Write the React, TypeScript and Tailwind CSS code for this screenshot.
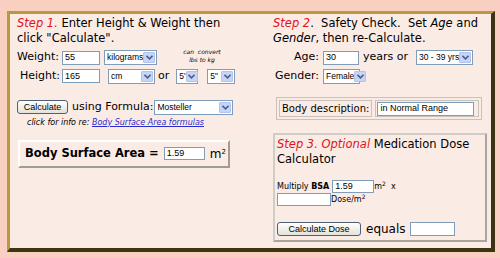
import React from 'react'

const font = { fontFamily: '"DejaVu Sans", Verdana, sans-serif' }
const small = { fontFamily: '"Liberation Sans", Arial, sans-serif' }

function Box({ value, w, h = 14 }: { value?: string; w: number; h?: number }) {
  return (
    <div
      className="bg-white border border-[#7f9db9] text-[9px] leading-none pl-[2px] flex items-center text-black shrink-0 whitespace-nowrap overflow-hidden"
      style={{ width: w, height: h, ...small }}
    >
      {value}
    </div>
  )
}

function Sel({ value, w, h = 15 }: { value: string; w: number; h?: number }) {
  return (
    <div
      className="bg-white border border-[#7f9db9] text-[8.5px] leading-none pl-[2px] flex items-center justify-between text-black shrink-0 whitespace-nowrap"
      style={{ width: w, height: h, ...small }}
    >
      <span>{value}</span>
      <span className="w-[12px] h-[11px] mr-[1px] shrink-0 bg-[#c6d4f7] border border-[#b2c4ee] rounded-[1px] flex items-center justify-center">
        <svg width="7" height="5" viewBox="0 0 7 5">
          <path d="M0.5 0.8 L3.5 3.8 L6.5 0.8" stroke="#4d6185" strokeWidth="1.6" fill="none" />
        </svg>
      </span>
    </div>
  )
}

function Btn({ label, w }: { label: string; w: number }) {
  return (
    <div
      className="h-[14px] border border-[#4f5f74] rounded-[3px] bg-gradient-to-b from-white to-[#e4e2d8] text-[9px] leading-none flex items-center justify-center text-black shrink-0 whitespace-nowrap"
      style={{ width: w, ...small }}
    >
      {label}
    </div>
  )
}

export default function App() {
  return (
    <div className="w-[500px] h-[258px] bg-[#f8cfc1] pt-[11px] pl-[7px] overflow-hidden" style={font}>
      <div className="w-[488px] h-[241px] bg-[#fbebe5] border-t-[3px] border-l-[3px] border-[#b8993f] border-r-[4px] border-r-[#3e3413] border-b-[4px] border-b-[#3e3413] flex text-black">
        {/* left column */}
        <div className="w-[263px] pl-[7px] pt-[2px]">
          <p className="text-[11.5px] leading-[15px] w-[230px]">
            <span className="text-[#e0141c] italic">Step 1.</span> Enter Height &amp; Weight then click "Calculate".
          </p>
          <div className="flex items-center mt-[4px] h-[15px] whitespace-nowrap">
            <span className="text-[11px] w-[45px]">Weight:</span>
            <Box value="55" w={38} />
            <div className="ml-[4px]"><Sel value="kilograms" w={53} /></div>
            <span className="ml-[22px] text-[6px] leading-[8px] italic -mt-[4px] w-[46px] text-center">can &nbsp;convert<br />lbs to kg</span>
          </div>
          <div className="flex items-center mt-[3px] h-[16px] whitespace-nowrap">
            <span className="text-[11px] w-[45px] pl-[3px]">Height:</span>
            <Box value="165" w={38} />
            <div className="ml-[8px]"><Sel value="cm" w={47} /></div>
            <span className="text-[11px] ml-[3px]">or</span>
            <div className="ml-[7px]"><Sel value="5'" w={22} /></div>
            <div className="ml-[9px]"><Sel value={'5"'} w={28} /></div>
          </div>
          <div className="flex items-center mt-[15px] whitespace-nowrap">
            <Btn label="Calculate" w={51} />
            <span className="text-[11px] ml-[4px]">using Formula:</span>
            <div className="ml-[1px]"><Sel value="Mosteller" w={79} /></div>
          </div>
          <p className="text-[8px] italic ml-[10px] mt-[2px] leading-[10px] whitespace-nowrap">
            click for info re: <span className="text-[#2b2bd0] underline">Body Surface Area formulas</span>
          </p>
          <div className="mt-[12px] ml-[1px] w-[212px] h-[28px] border-2 border-t-[#ffffff] border-l-[#ffffff] border-r-[#a09c98] border-b-[#a09c98] bg-[#fbebe5] flex items-center pl-[5px] whitespace-nowrap">
            <span className="text-[11.5px] font-bold">Body Surface Area =</span>
            <div className="ml-[5px]"><Box value="1.59" w={41} h={13} /></div>
            <span className="text-[12px] ml-[5px]">m<sup className="text-[7px]">2</sup></span>
          </div>
        </div>
        {/* right column */}
        <div className="flex-1 pt-[2px]">
          <p className="text-[11.5px] leading-[15px] w-[215px]">
            <span className="text-[#e0141c] italic">Step 2</span>. &nbsp;Safety Check. &nbsp;Set <i>Age</i> and <i>Gender</i>, then re-Calculate.
          </p>
          <div className="flex items-center mt-[4px] h-[15px] whitespace-nowrap">
            <span className="text-[11px] w-[50px] text-right pr-[4px]">Age:</span>
            <Box value="30" w={36} />
            <span className="text-[11px] ml-[4px]">years or</span>
            <div className="ml-[8px]"><Sel value="30 - 39 yrs" w={57} /></div>
          </div>
          <div className="flex items-center mt-[4px] h-[15px] whitespace-nowrap">
            <span className="text-[11px] w-[50px] text-right pr-[4px]">Gender:</span>
            <Sel value="Female" w={37} />
          </div>
          <div className="mt-[13px] ml-[3px] w-[206px] h-[23px] border border-[#c8c2bd] flex items-center p-[2px] gap-[3px] whitespace-nowrap">
            <div className="h-full border border-[#c8c2bd] flex items-center px-[2px] text-[10px]">Body description:</div>
            <div className="h-full flex-1 border border-[#c8c2bd] flex items-center px-[1px]">
              <Box value="in Normal Range" w={97} h={14} />
            </div>
          </div>
          <div className="mt-[13px] w-[214px] h-[109px] border-2 border-t-[#d0ccc8] border-l-[#d0ccc8] border-r-[#a8a49e] border-b-[#a8a49e] pl-[2px] pt-[2px]">
            <p className="text-[11.5px] leading-[15px]">
              <span className="text-[#e0141c] italic">Step 3. Optional</span> Medication Dose Calculator
            </p>
            <div className="flex items-center mt-[13px] whitespace-nowrap">
              <span className="text-[8px]">Multiply <b>BSA</b></span>
              <div className="ml-[3px]"><Box value="1.59" w={42} h={13} /></div>
              <span className="text-[8px]">m<sup className="text-[6px]">2</sup>&nbsp; x</span>
            </div>
            <div className="flex items-center whitespace-nowrap">
              <Box w={54} h={13} />
              <span className="text-[8px]">Dose/m<sup className="text-[6px]">2</sup></span>
            </div>
            <div className="flex items-center mt-[14px] whitespace-nowrap">
              <Btn label="Calculate Dose" w={84} />
              <span className="text-[12px] ml-[5px]">equals</span>
              <div className="ml-[4px]"><Box w={45} h={14} /></div>
            </div>
          </div>
        </div>
      </div>
    </div>
  )
}
